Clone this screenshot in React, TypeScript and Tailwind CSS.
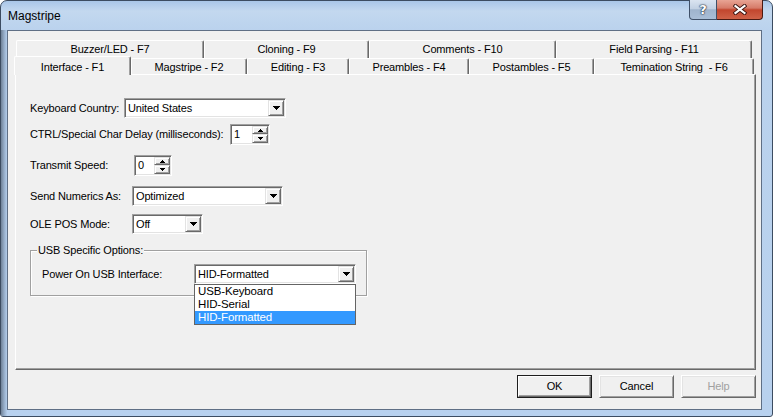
import React from "react";

const SUNKEN =
  "border border-t-[#a0a0a0] border-l-[#a0a0a0] border-r-white border-b-white shadow-[inset_1px_1px_0_#696969,inset_-1px_-1px_0_#e3e3e3]";
const RAISED =
  "border border-t-[#e3e3e3] border-l-[#e3e3e3] border-r-[#696969] border-b-[#696969] shadow-[inset_1px_1px_0_#ffffff,inset_-1px_-1px_0_#a0a0a0] bg-[#f0f0f0]";

function ArrowDown() {
  return (
    <svg width="7" height="4" viewBox="0 0 7 4" shapeRendering="crispEdges">
      <rect x="0" y="0" width="7" height="1" fill="#000" />
      <rect x="1" y="1" width="5" height="1" fill="#000" />
      <rect x="2" y="2" width="3" height="1" fill="#000" />
      <rect x="3" y="3" width="1" height="1" fill="#000" />
    </svg>
  );
}

function SmallArrow({ up }: { up?: boolean }) {
  return (
    <svg width="5" height="3" viewBox="0 0 5 3" shapeRendering="crispEdges">
      {up ? (
        <>
          <rect x="2" y="0" width="1" height="1" fill="#000" />
          <rect x="1" y="1" width="3" height="1" fill="#000" />
          <rect x="0" y="2" width="5" height="1" fill="#000" />
        </>
      ) : (
        <>
          <rect x="0" y="0" width="5" height="1" fill="#000" />
          <rect x="1" y="1" width="3" height="1" fill="#000" />
          <rect x="2" y="2" width="1" height="1" fill="#000" />
        </>
      )}
    </svg>
  );
}

function Combo({ value, className = "" }: { value: string; className?: string }) {
  return (
    <div className={`${SUNKEN} bg-white h-[20px] p-[1px] flex ${className}`}>
      <div className="flex-1 flex items-center pl-[2px] leading-none whitespace-nowrap overflow-hidden">
        {value}
      </div>
      <div className={`${RAISED} w-[16px] flex items-center justify-center`}>
        <ArrowDown />
      </div>
    </div>
  );
}

function Spin({ value, className = "" }: { value: string; className?: string }) {
  return (
    <div className={`${SUNKEN} bg-white h-[21px] p-[1px] flex ${className}`}>
      <div className="flex-1 flex items-center pl-[2px] leading-none">{value}</div>
      <div className="w-[16px] flex flex-col">
        <div className={`${RAISED} h-[8px] flex items-center justify-center`}>
          <SmallArrow up />
        </div>
        <div className={`${RAISED} flex-1 flex items-center justify-center`}>
          <SmallArrow />
        </div>
      </div>
    </div>
  );
}

function BackTab({ label, className }: { label: string; className: string }) {
  return (
    <div
      className={`h-[18px] rounded-t-[2px] border-l border-t border-white border-r border-r-[#696969] shadow-[inset_-1px_0_0_#a0a0a0] flex items-center justify-center whitespace-pre ${className}`}
    >
      {label}
    </div>
  );
}

function FrontTab({ label, className, selected }: { label: string; className: string; selected?: boolean }) {
  if (selected) {
    return (
      <div
        className={`relative z-10 -mt-[2px] h-[19px] bg-[#f0f0f0] rounded-t-[2px] border-l border-t border-white border-r border-r-[#696969] shadow-[inset_-1px_0_0_#a0a0a0] flex items-start pt-[2px] justify-center whitespace-pre ${className}`}
      >
        {label}
      </div>
    );
  }
  return (
    <div
      className={`h-[16px] rounded-t-[2px] border-l border-t border-white border-r border-r-[#696969] shadow-[inset_-1px_0_0_#a0a0a0] flex items-center pt-[1px] justify-center whitespace-pre ${className}`}
    >
      {label}
    </div>
  );
}

function Btn({
  children,
  className = "",
  def,
  disabled,
}: {
  children: React.ReactNode;
  className?: string;
  def?: boolean;
  disabled?: boolean;
}) {
  if (def) {
    return (
      <div className={`h-[23px] border border-[#1e1e1e] bg-[#f0f0f0] p-0 flex ${className}`}>
        <div className="flex-1 border border-t-white border-l-white border-r-[#696969] border-b-[#696969] shadow-[inset_-1px_-1px_0_#a0a0a0] flex items-center justify-center">
          {children}
        </div>
      </div>
    );
  }
  return (
    <div
      className={`h-[23px] border border-t-white border-l-white border-r-[#696969] border-b-[#696969] shadow-[inset_1px_1px_0_#e3e3e3,inset_-1px_-1px_0_#a0a0a0] bg-[#f0f0f0] flex items-center justify-center ${
        disabled ? "text-[#a0a0a0]" : ""
      } ${className}`}
    >
      {children}
    </div>
  );
}

export default function App() {
  return (
    <div className="w-[773px] h-[417px] bg-white font-['Liberation_Sans',Arial,sans-serif] text-[11px] tracking-[-0.15px] text-black overflow-hidden">
      <div className="w-full h-full rounded-t-[7px] rounded-b-[3px] border border-[#3c4c61] bg-[linear-gradient(180deg,#a9c6e8_0px,#c3d8ef_10px,#bad2ed_30px,#b8d1ee_100%)] flex flex-col">
        {/* title bar */}
        <div className="h-[29px] flex items-start shrink-0">
          <div className="pl-[7px] pt-[7px] text-[12px] tracking-normal leading-[16px] text-black">Magstripe</div>
          <div className="flex-1" />
          <div className="flex -mt-[1px] mr-[9px]">
            <div className="w-[28px] h-[20px] rounded-bl-[4px] border border-[#3f5068] border-t-0 bg-[linear-gradient(180deg,#dae4f0_0%,#c2d1e3_45%,#9fb4cd_52%,#a9bed7_100%)] flex items-center justify-center text-white font-bold text-[13px] leading-none font-['DejaVu_Sans',sans-serif] [text-shadow:0_0_1px_#1f2d40,0_0_1px_#1f2d40,0_0_2px_#1f2d40]">
              ?
            </div>
            <div className="w-[46px] h-[20px] rounded-br-[4px] border border-[#4b1a12] border-t-0 border-l-0 bg-[linear-gradient(180deg,#e8a494_0%,#d67b69_42%,#c2462e_52%,#cf6248_100%)] flex items-center justify-center">
              <svg width="14" height="11" viewBox="0 0 14 11">
                <path d="M2.5 2 L11.5 9 M11.5 2 L2.5 9" stroke="#3a1410" strokeWidth="4" strokeLinecap="square" />
                <path d="M2.5 2 L11.5 9 M11.5 2 L2.5 9" stroke="#ffffff" strokeWidth="2.2" strokeLinecap="square" />
              </svg>
            </div>
          </div>
        </div>

        {/* frame + client */}
        <div className="flex-1 flex min-h-0">
          <div className="w-[6px] bg-[linear-gradient(90deg,#6f8197_0px,#94abc6_3px,#b4cdeb_6px)]" />
          <div className="flex-1 mr-[10px] mb-[6px] border border-[#5f6f85] bg-[#f0f0f0] flex flex-col">
            <div className="pl-[7px] pr-[5px] pt-[9px]">
              {/* back row */}
              <div className="flex pl-[1px]">
                <BackTab label="Buzzer/LED - F7" className="w-[188px]" />
                <BackTab label="Cloning - F9" className="w-[165px]" />
                <BackTab label="Comments - F10" className="w-[187px]" />
                <BackTab label="Field Parsing - F11" className="w-[196px]" />
              </div>
              {/* front row */}
              <div className="flex items-start h-[16px] -ml-[1px]">
                <FrontTab label="Interface - F1" className="w-[117px]" selected />
                <FrontTab label="Magstripe - F2" className="w-[116px]" />
                <FrontTab label="Editing - F3" className="w-[102px]" />
                <FrontTab label="Preambles - F4" className="w-[120px]" />
                <FrontTab label="Postambles - F5" className="w-[125px]" />
                <FrontTab label="Temination String  - F6" className="w-[160px]" />
              </div>
              {/* panel */}
              <div className="h-[296px] border border-t-white border-l-white border-r-[#696969] border-b-[#696969] shadow-[inset_-1px_-1px_0_#a0a0a0] bg-[#f0f0f0] flex flex-col pl-[14px]">
                <div className="flex items-center mt-[23px]">
                  <div className="w-[94px]">Keyboard Country:</div>
                  <Combo value="United States" className="w-[162px]" />
                </div>
                <div className="flex items-center mt-[6px]">
                  <div className="w-[200px]">CTRL/Special Char Delay (milliseconds):</div>
                  <Spin value="1" className="w-[40px]" />
                </div>
                <div className="flex items-center mt-[10px]">
                  <div className="w-[104px]">Transmit Speed:</div>
                  <Spin value="0" className="w-[38px]" />
                </div>
                <div className="flex items-center mt-[10px]">
                  <div className="w-[102px]">Send Numerics As:</div>
                  <Combo value="Optimized" className="w-[151px]" />
                </div>
                <div className="flex items-center mt-[8px]">
                  <div className="w-[102px]">OLE POS Mode:</div>
                  <Combo value="Off" className="w-[71px]" />
                </div>
                <fieldset className="mt-[10px] w-[337px] border border-[#a0a0a0] shadow-[inset_1px_1px_0_#ffffff,1px_1px_0_#ffffff] pl-[11px] pt-[7px] pb-[11px]">
                  <legend className="-ml-[5px] px-[1px] leading-[13px] bg-[#f0f0f0]">USB Specific Options:</legend>
                  <div className="flex items-center">
                    <div className="w-[152px]">Power On USB Interface:</div>
                    <div className="relative">
                      <Combo value="HID-Formatted" className="w-[162px]" />
                      <div className="absolute left-0 top-full w-[162px] border border-[#646464] bg-white z-20 text-[11.5px]">
                        <div className="h-[13px] leading-[13px] pl-[3px]">USB-Keyboard</div>
                        <div className="h-[13px] leading-[13px] pl-[3px]">HID-Serial</div>
                        <div className="h-[13px] leading-[13px] pl-[3px] bg-[#3399ff] text-white">HID-Formatted</div>
                      </div>
                    </div>
                  </div>
                </fieldset>
              </div>
            </div>
            {/* buttons */}
            <div className="flex justify-end gap-[7px] pr-[5px] mt-[5px]">
              <Btn def className="w-[75px]">OK</Btn>
              <Btn className="w-[75px]">Cancel</Btn>
              <Btn disabled className="w-[75px]">Help</Btn>
            </div>
          </div>
        </div>
      </div>
    </div>
  );
}
